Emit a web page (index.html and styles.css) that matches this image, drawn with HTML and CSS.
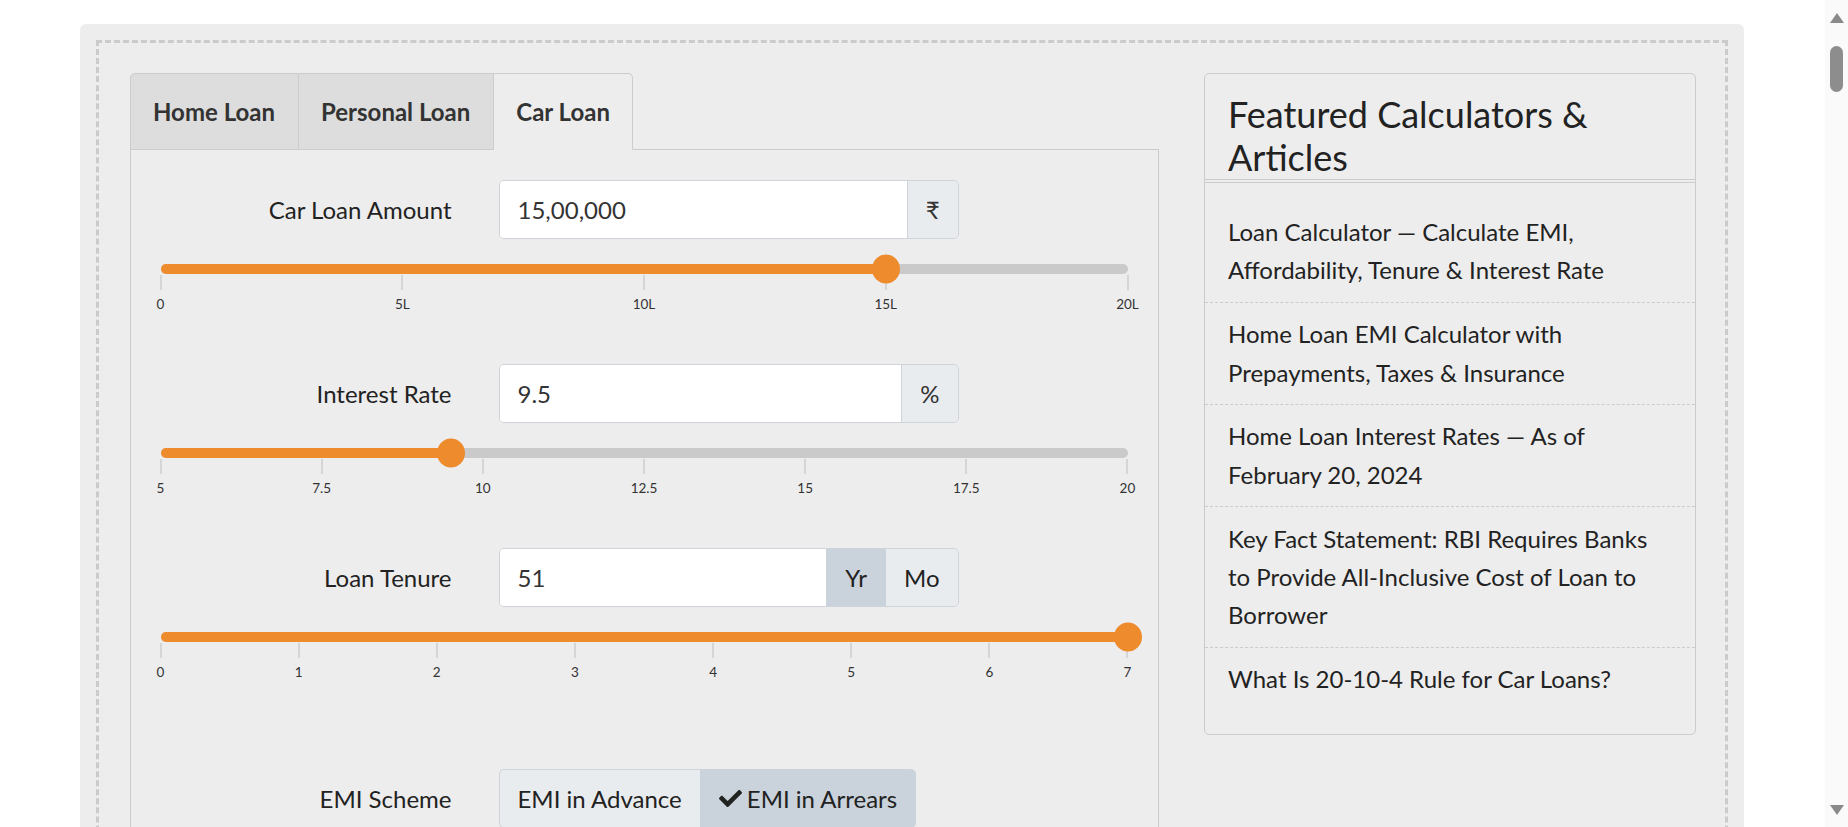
FILE: index.html
```html
<!DOCTYPE html>
<html lang="en">
<head>
<meta charset="utf-8">
<title>Car Loan EMI Calculator</title>
<link rel="stylesheet" href="styles.css">
</head>
<body>
<div class="page">
  <div class="dash">
    <div class="layout">
      <section class="calc">
        <nav class="tabs">
          <a class="tab">Home Loan</a>
          <a class="tab">Personal Loan</a>
          <a class="tab active">Car Loan</a>
        </nav>
        <div class="tab-body">
          <div class="row">
            <label class="lbl">Car Loan Amount</label>
            <div class="group">
              <span class="field">15,00,000</span>
              <span class="addon">₹</span>
            </div>
          </div>
          <div class="slider">
            <div class="track"><div class="fill" style="width:75%"></div><span class="thumb" style="left:75%"></span></div>
            <div class="ticks">
              <span class="tick"><i></i><b>0</b></span>
              <span class="tick"><i></i><b>5L</b></span>
              <span class="tick"><i></i><b>10L</b></span>
              <span class="tick"><i></i><b>15L</b></span>
              <span class="tick"><i></i><b>20L</b></span>
            </div>
          </div>

          <div class="row">
            <label class="lbl">Interest Rate</label>
            <div class="group">
              <span class="field">9.5</span>
              <span class="addon">%</span>
            </div>
          </div>
          <div class="slider">
            <div class="track"><div class="fill" style="width:30%"></div><span class="thumb" style="left:30%"></span></div>
            <div class="ticks">
              <span class="tick"><i></i><b>5</b></span>
              <span class="tick"><i></i><b>7.5</b></span>
              <span class="tick"><i></i><b>10</b></span>
              <span class="tick"><i></i><b>12.5</b></span>
              <span class="tick"><i></i><b>15</b></span>
              <span class="tick"><i></i><b>17.5</b></span>
              <span class="tick"><i></i><b>20</b></span>
            </div>
          </div>

          <div class="row">
            <label class="lbl">Loan Tenure</label>
            <div class="group">
              <span class="field">51</span>
              <span class="addon btn on">Yr</span>
              <span class="addon btn">Mo</span>
            </div>
          </div>
          <div class="slider">
            <div class="track"><div class="fill" style="width:100%"></div><span class="thumb" style="left:100%"></span></div>
            <div class="ticks">
              <span class="tick"><i></i><b>0</b></span>
              <span class="tick"><i></i><b>1</b></span>
              <span class="tick"><i></i><b>2</b></span>
              <span class="tick"><i></i><b>3</b></span>
              <span class="tick"><i></i><b>4</b></span>
              <span class="tick"><i></i><b>5</b></span>
              <span class="tick"><i></i><b>6</b></span>
              <span class="tick"><i></i><b>7</b></span>
            </div>
          </div>

          <div class="row scheme">
            <label class="lbl">EMI Scheme</label>
            <div class="btn-group">
              <span class="sbtn">EMI in Advance</span>
              <span class="sbtn on"><svg class="check" viewBox="0 0 512 512" aria-hidden="true"><path d="M173.9 439.4l-166.4-166.4c-10-10-10-26.2 0-36.2l36.2-36.2c10-10 26.2-10 36.2 0L192 312.7 432.1 72.6c10-10 26.2-10 36.2 0l36.2 36.2c10 10 10 26.2 0 36.2l-294.4 294.4c-10 10-26.2 10-36.2 0z"/></svg>EMI in Arrears</span>
            </div>
          </div>
        </div>
      </section>

      <aside class="card">
        <h3 class="card-title">Featured Calculators &amp; Articles</h3>
        <ul class="links">
          <li>Loan Calculator — Calculate EMI, Affordability, Tenure &amp; Interest Rate</li>
          <li>Home Loan EMI Calculator with Prepayments, Taxes &amp; Insurance</li>
          <li>Home Loan Interest Rates — As of February 20, 2024</li>
          <li>Key Fact Statement: RBI Requires Banks to Provide All-Inclusive Cost of Loan to Borrower</li>
          <li>What Is 20-10-4 Rule for Car Loans?</li>
        </ul>
      </aside>
    </div>
  </div>
</div>
<div class="scrollbar" aria-hidden="true">
  <span class="sb-up"></span>
  <span class="sb-thumb"></span>
  <span class="sb-down"></span>
</div>
</body>
</html>
```
FILE: styles.css
```css
html, body {
  margin: 0;
  padding: 0;
  background: #ffffff;
}
body {
  font-family: Lato, "Open Sans", "DejaVu Sans", sans-serif;
  color: #222222;
}

/* window scrollbar (drawn over the page edge) */
.scrollbar {
  position: fixed;
  top: 0;
  right: 0;
  width: 23px;
  height: 100vh;
  background: #fafafa;
  display: flex;
  flex-direction: column;
  align-items: center;
  z-index: 10;
}
.sb-up {
  margin-top: 13px;
  width: 0;
  height: 0;
  border-left: 7px solid transparent;
  border-right: 7px solid transparent;
  border-bottom: 10px solid #8a8a8a;
}
.sb-thumb {
  margin-top: 23px;
  width: 13px;
  height: 46px;
  border-radius: 7px;
  background: #8d8d8d;
}
.sb-down {
  margin-top: auto;
  margin-bottom: 12px;
  width: 0;
  height: 0;
  border-left: 7px solid transparent;
  border-right: 7px solid transparent;
  border-top: 10px solid #8a8a8a;
}

.page {
  width: 1664px;
  margin: 24px 0 0 80px;
  padding: 16px;
  box-sizing: border-box;
  background: #ededed;
  border-radius: 6px;
  min-height: 1400px;
}
.dash {
  border: 3px dashed #cbcbcb;
  min-height: 1300px;
}
.layout {
  display: grid;
  grid-template-columns: 1029px 492px;
  column-gap: 45px;
  padding: 30px 30px 30px 30.5px;
  align-items: start;
}

/* tabs */
.tabs {
  display: flex;
  position: relative;
  z-index: 1;
  margin-bottom: -1px;
}
.tab {
  display: flex;
  align-items: center;
  height: 77px;
  box-sizing: border-box;
  padding: 0 22.5px;
  font-size: 24px;
  font-weight: 700;
  color: #333333;
  background: #dddddd;
  border: 1px solid #cccccc;
  border-left: 0;
}
.tab:first-child {
  border-left: 1px solid #cccccc;
  border-top-left-radius: 5px;
}
.tab:last-child {
  border-top-right-radius: 5px;
}
.tab.active {
  background: #ededed;
  border-bottom-color: #ededed;
}
.tab-body {
  border: 1px solid #cccccc;
  padding: 30px 30px 60px;
  min-height: 800px;
}

/* form rows */
.row {
  display: grid;
  grid-template-columns: 291px 460px;
  column-gap: 47px;
  align-items: center;
}
.lbl {
  text-align: right;
  font-size: 24px;
  color: #222222;
}
.group {
  display: flex;
  height: 59px;
  box-sizing: border-box;
  border: 1px solid #ced4da;
  border-radius: 5px;
  overflow: hidden;
  font-size: 24px;
}
.field {
  flex: 1;
  display: flex;
  align-items: center;
  padding: 0 18px;
  background: #ffffff;
  color: #333333;
}
.addon {
  display: flex;
  align-items: center;
  padding: 0 18px;
  background: #e9ecef;
  border-left: 1px solid #ced4da;
  color: #333333;
}
.addon.btn {
  color: #222222;
}
.addon.on {
  background: #cad3db;
}
.addon.on + .addon {
  border-left-color: #cad3db;
}

/* sliders */
.slider {
  margin: 25px 0 52px;
}
.track {
  position: relative;
  height: 10px;
  border-radius: 5px;
  background: #cacaca;
}
.fill {
  height: 100%;
  border-radius: 5px;
  background: #ed8b2d;
}
.thumb {
  position: absolute;
  top: 50%;
  width: 28px;
  height: 29px;
  border-radius: 50%;
  background: #ed8b2d;
  transform: translate(-50%, -50%);
}
.ticks {
  display: flex;
  justify-content: space-between;
}
.tick {
  width: 0;
  display: flex;
  flex-direction: column;
  align-items: center;
}
.tick i {
  display: block;
  width: 2px;
  height: 15px;
  margin-top: 1px;
  background: #d5d5d5;
  flex: none;
}
.tick b {
  font-weight: 400;
  font-size: 13.5px;
  line-height: 16px;
  margin-top: 6px;
  white-space: nowrap;
  color: #333333;
}

/* emi scheme */
.scheme {
  margin-top: 89px;
}
.btn-group {
  display: flex;
}
.sbtn {
  display: flex;
  align-items: center;
  height: 59px;
  box-sizing: border-box;
  padding: 0 18px;
  font-size: 24px;
  color: #222222;
  background: #e9ecef;
  border: 1px solid #ced4da;
  white-space: nowrap;
}
.sbtn:first-child {
  border-radius: 5px 0 0 5px;
  border-right: 0;
}
.sbtn:last-child {
  border-radius: 0 5px 5px 0;
}
.sbtn.on {
  background: #cad3db;
  border-color: #cad3db;
}
.check {
  width: 23px;
  height: 23px;
  margin-right: 5px;
  fill: #222222;
}

/* featured card */
.card {
  border: 1px solid #cccccc;
  border-radius: 5px;
}
.card-title {
  margin: 0;
  padding: 18.5px 23.5px 0;
  font-size: 36px;
  font-weight: 400;
  line-height: 1.2;
  color: #222222;
  border-bottom: 1px solid #cccccc;
}
.links {
  list-style: none;
  margin: 2px 0 0;
  padding: 18px 0 23.5px;
  border-top: 1px solid #cccccc;
}
.links li {
  padding: 12.2px 23.5px;
  font-size: 24px;
  line-height: 38.4px;
  color: #222222;
  border-top: 1px dashed #cccccc;
}
.links li:first-child {
  border-top: 0;
}
```
